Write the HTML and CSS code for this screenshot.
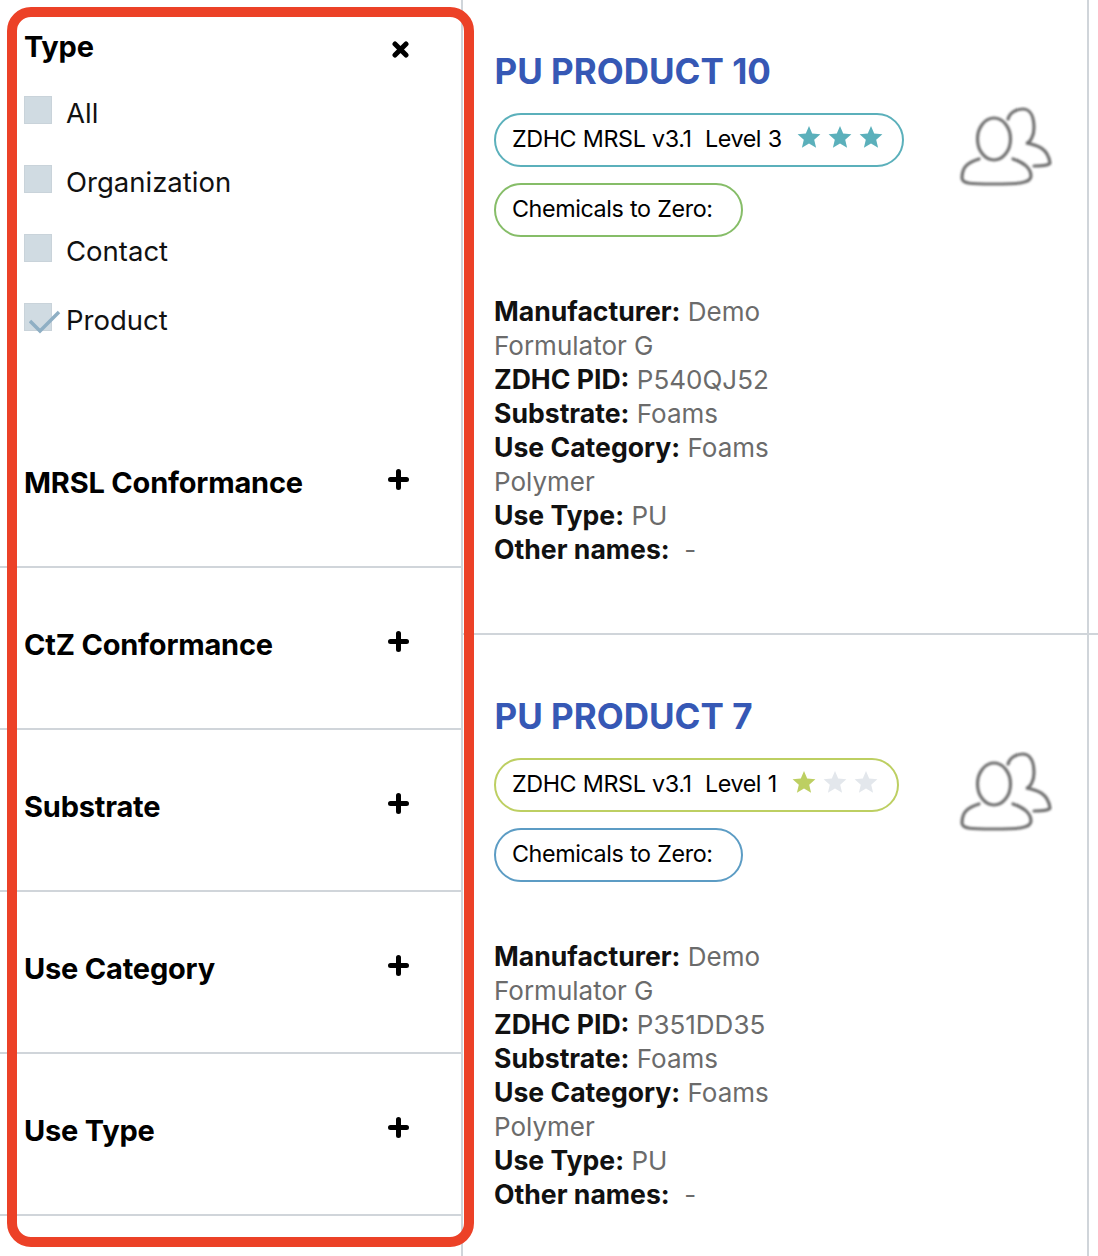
FILE: index.html
```html
<!DOCTYPE html>
<html>
  <head>
    <meta name="viewport" content="width=device-width, initial-scale=1" />
    <link rel="stylesheet" href="styles.css">
  </head>
  <body>
    <svg class="defs" width="0" height="0">
      <defs>
        <polygon id="star" points="12,1 15.2,8.6 23.4,9.3 17.2,14.7 19.1,22.8 12,18.5 4.9,22.8 6.8,14.7 .6,9.3 8.8,8.6" />
        <filter id="soft"><feGaussianBlur stdDeviation="0.9" /></filter>
        <g id="people" fill="none" stroke="#707070" stroke-width="3.2" stroke-linecap="round" filter="url(#soft)">
          <ellipse cx="37" cy="33" rx="16.5" ry="21" />
          <path d="M51 13C53 6 60 3 66 3C74 3 77 12 77 22C77 30 73 37 69 37C80 39 91 42 93 57C93 59 85 60 77 60" />
          <path d="M22 53C12 56 5 60 5 72C5 78 15 78 36 78C58 78 74 78 74 70C74 62 66 56 56 53" />
        </g>
      </defs>
    </svg>

    <div class="page">
      <aside class="sidebar">
        <section class="filter-open">
          <div class="filter-head">
            <h3>Type</h3>
            <svg class="close-icon" width="17" height="17" viewBox="0 0 17 17"><path d="M3 3L14 14M14 3L3 14" stroke="#000" stroke-width="5" stroke-linecap="round" /></svg>
          </div>
          <label class="check-row"><span class="checkbox"></span>All</label>
          <label class="check-row"><span class="checkbox"></span>Organization</label>
          <label class="check-row"><span class="checkbox"></span>Contact</label>
          <label class="check-row">
            <span class="checkbox">
              <svg class="tick" width="32" height="24" viewBox="0 0 32 24"><path d="M1 11L11 21L30 2" fill="none" stroke="#8fafc4" stroke-width="3.5" /></svg>
            </span>
            Product
          </label>
        </section>

        <section class="filter">
          <div class="filter-head">
            <h3>MRSL Conformance</h3>
            <svg class="plus-icon" width="21" height="21" viewBox="0 0 21 21"><path d="M2.5 10.5H18.5M10.5 2.5V18.5" stroke="#000" stroke-width="5" stroke-linecap="round" /></svg>
          </div>
        </section>
        <section class="filter">
          <div class="filter-head">
            <h3>CtZ Conformance</h3>
            <svg class="plus-icon" width="21" height="21" viewBox="0 0 21 21"><path d="M2.5 10.5H18.5M10.5 2.5V18.5" stroke="#000" stroke-width="5" stroke-linecap="round" /></svg>
          </div>
        </section>
        <section class="filter">
          <div class="filter-head">
            <h3>Substrate</h3>
            <svg class="plus-icon" width="21" height="21" viewBox="0 0 21 21"><path d="M2.5 10.5H18.5M10.5 2.5V18.5" stroke="#000" stroke-width="5" stroke-linecap="round" /></svg>
          </div>
        </section>
        <section class="filter">
          <div class="filter-head">
            <h3>Use Category</h3>
            <svg class="plus-icon" width="21" height="21" viewBox="0 0 21 21"><path d="M2.5 10.5H18.5M10.5 2.5V18.5" stroke="#000" stroke-width="5" stroke-linecap="round" /></svg>
          </div>
        </section>
        <section class="filter">
          <div class="filter-head">
            <h3>Use Type</h3>
            <svg class="plus-icon" width="21" height="21" viewBox="0 0 21 21"><path d="M2.5 10.5H18.5M10.5 2.5V18.5" stroke="#000" stroke-width="5" stroke-linecap="round" /></svg>
          </div>
        </section>
      </aside>

      <main class="results">
        <article class="card card-first">
          <h2>PU PRODUCT 10</h2>
          <div class="card-top">
            <div class="pills">
              <div class="pill pill-teal">
                ZDHC MRSL v3.1&nbsp; Level 3
                <span class="stars stars-teal">
                  <svg viewBox="0 0 24 24"><use href="#star" /></svg>
                  <svg viewBox="0 0 24 24"><use href="#star" /></svg>
                  <svg viewBox="0 0 24 24"><use href="#star" /></svg>
                </span>
              </div>
              <div class="pill pill-green">Chemicals to Zero:</div>
            </div>
            <svg class="people" width="96" height="84" viewBox="0 0 96 84"><use href="#people" /></svg>
          </div>
          <div class="details">
            <p><b>Manufacturer:</b> Demo Formulator G</p>
            <p><b>ZDHC PID:</b> P540QJ52</p>
            <p><b>Substrate:</b> Foams</p>
            <p><b>Use Category:</b> Foams Polymer</p>
            <p><b>Use Type:</b> PU</p>
            <p><b>Other names:</b>&nbsp; -</p>
          </div>
        </article>

        <article class="card">
          <h2>PU PRODUCT 7</h2>
          <div class="card-top">
            <div class="pills">
              <div class="pill pill-lime">
                ZDHC MRSL v3.1&nbsp; Level 1
                <span class="stars stars-lime">
                  <svg viewBox="0 0 24 24"><use href="#star" /></svg>
                  <svg class="star-off" viewBox="0 0 24 24"><use href="#star" /></svg>
                  <svg class="star-off" viewBox="0 0 24 24"><use href="#star" /></svg>
                </span>
              </div>
              <div class="pill pill-blue">Chemicals to Zero:</div>
            </div>
            <svg class="people" width="96" height="84" viewBox="0 0 96 84"><use href="#people" /></svg>
          </div>
          <div class="details">
            <p><b>Manufacturer:</b> Demo Formulator G</p>
            <p><b>ZDHC PID:</b> P351DD35</p>
            <p><b>Substrate:</b> Foams</p>
            <p><b>Use Category:</b> Foams Polymer</p>
            <p><b>Use Type:</b> PU</p>
            <p><b>Other names:</b>&nbsp; -</p>
          </div>
        </article>
      </main>

      <div class="highlight"></div>
    </div>
  </body>
</html>
```

FILE: styles.css
```css
html,
body {
  margin: 0;
  height: 1256px;
  overflow: hidden;
  background: #fff;
}

body {
  font-family: Inter, "Liberation Sans", Arial, sans-serif;
  color: #000;
}

.defs {
  display: block;
  height: 0;
}

.page {
  display: flex;
  position: relative;
  height: 1256px;
}

/* filters */
.sidebar {
  width: 463px;
  flex: none;
  border-right: 2px solid #d0d5da;
  box-sizing: border-box;
}

.filter-open {
  height: 406px;
  padding: 29px 52px 0 24px;
  box-sizing: border-box;
}

.filter {
  height: 162px;
  padding: 59px 52px 0 24px;
  box-sizing: border-box;
  border-bottom: 2px solid #d0d5da;
}

.filter-head {
  display: flex;
  justify-content: space-between;
  align-items: center;
}

.filter-head h3 {
  margin: 0;
  font-size: 29px;
  line-height: 36px;
  font-weight: 700;
  letter-spacing: -0.2px;
}

.close-icon {
  margin: 4px 0 0;
}

.plus-icon {
  margin: -8px 0 0;
}

.check-row {
  display: flex;
  align-items: flex-start;
  gap: 14px;
  margin-top: 30px;
  font-size: 27.5px;
  line-height: 36px;
  color: #111;
}

.check-row + .check-row {
  margin-top: 33px;
}

.checkbox {
  width: 28px;
  height: 28px;
  flex: none;
  margin-top: 1px;
  position: relative;
  background: #d0dbe2;
  border: 1px solid #c9d3da;
  box-sizing: border-box;
}

.tick {
  position: absolute;
  left: 4px;
  top: 6px;
}

/* product cards */
.results {
  flex: 1;
  background: linear-gradient(#d0d5da, #d0d5da) 624px 0 / 2px 100% no-repeat;
}

.card {
  height: 645px;
  padding: 62px 45px 0 31px;
  box-sizing: border-box;
  border-bottom: 2px solid #d0d5da;
}

.card-first {
  height: 635px;
  padding-top: 52px;
}

.card h2 {
  margin: 0 0 23px 0.5px;
  font-size: 35px;
  line-height: 38px;
  font-weight: 700;
  color: #3658b5;
}

.card-top {
  display: flex;
  justify-content: space-between;
  align-items: flex-start;
}

.pills {
  display: flex;
  flex-direction: column;
  align-items: flex-start;
  gap: 16px;
}

.pill {
  display: flex;
  align-items: center;
  height: 54px;
  padding: 0 19px 4px 16px;
  box-sizing: border-box;
  border: 2px solid;
  border-radius: 27px;
  font-size: 23.3px;
  letter-spacing: -0.4px;
  word-spacing: 0.5px;
  white-space: nowrap;
}

.pill-teal {
  border-color: #5bb0bb;
}

.pill-green {
  border-color: #86bd68;
  padding-right: 28px;
}

.pill-lime {
  border-color: #bdcf62;
}

.pill-blue {
  border-color: #5c9cc4;
  padding-right: 28px;
}

.stars {
  display: flex;
  gap: 7px;
  margin-left: 15px;
  margin-top: -2px;
}

.stars svg {
  width: 24px;
  height: 24px;
}

.stars-teal {
  fill: #5bb0bb;
}

.stars-lime {
  fill: #bdcf62;
}

.stars .star-off {
  fill: #e3e7ec;
}

.people {
  margin-top: -7px;
}

.details {
  width: 300px;
  margin-top: 58px;
  font-size: 26px;
  line-height: 34px;
  color: #6b6b6b;
}

.details p {
  margin: 0;
}

.details b {
  color: #111;
  font-size: 26.6px;
  line-height: 1;
  font-weight: 700;
}

/* red annotation round the filter column */
.highlight {
  position: absolute;
  left: 7px;
  top: 7px;
  width: 467px;
  height: 1240px;
  box-sizing: border-box;
  border: 10px solid #ec4127;
  border-radius: 24px;
}
```
